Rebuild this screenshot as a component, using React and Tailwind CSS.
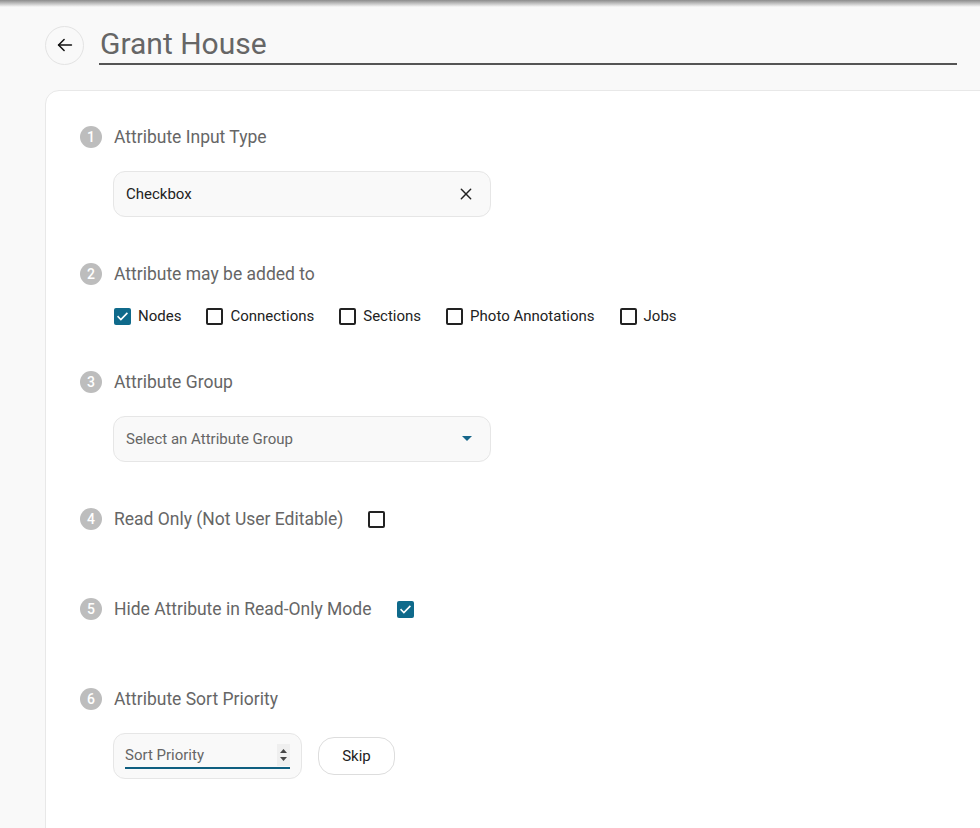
import React from "react";

const font = { fontFamily: "Roboto, 'Noto Sans', sans-serif" };

function Step({ n }) {
  return (
    <div className="w-[22px] h-[22px] rounded-full bg-[#bdbdbd] text-white text-[14px] font-medium flex items-center justify-center shrink-0">
      {n}
    </div>
  );
}

function Label({ n, children }) {
  return (
    <div className="flex items-center h-[24px]">
      <Step n={n} />
      <div className="ml-[12px] text-[17.5px] text-[#666666] leading-[24px]">{children}</div>
    </div>
  );
}

function Box({ checked }) {
  if (checked) {
    return (
      <div className="w-[17px] h-[17px] rounded-[2px] bg-[#0f6a8b] flex items-center justify-center shrink-0">
        <svg width="13" height="13" viewBox="0 0 24 24" fill="none" stroke="white" strokeWidth="3" strokeLinecap="square">
          <path d="M4 12.5l5 5L20 6.5" />
        </svg>
      </div>
    );
  }
  return <div className="w-[17px] h-[17px] rounded-[2px] border-2 border-[#222] bg-white shrink-0" />;
}

function Check({ checked, label }) {
  return (
    <div className="flex items-center">
      <Box checked={checked} />
      <span className="ml-[7px] text-[15px] text-[#222]">{label}</span>
    </div>
  );
}

export default function App() {
  return (
    <div style={font} className="relative w-[980px] h-[828px] overflow-hidden bg-[#f9f9f9]">
      <div className="absolute top-0 left-0 right-0 h-[7px] bg-gradient-to-b from-[#8c8c8c] to-[#f9f9f9]" />
      <div className="flex items-center pt-[25px] pl-[45px]">
        <div className="w-[39px] h-[39px] rounded-full border border-[#e3e3e3] bg-[#f9f9f9] flex items-center justify-center shrink-0">
          <svg width="22" height="22" viewBox="0 0 24 24" fill="none" stroke="#111" strokeWidth="1.7" strokeLinecap="round" strokeLinejoin="round">
            <path d="M19 12H5" />
            <path d="M11 18l-6-6 6-6" />
          </svg>
        </div>
        <div className="ml-[15px] w-[858px] h-[40px] border-b-2 border-[#555] flex items-end">
          <span className="ml-[1px] text-[30px] leading-[38px] text-[#666666] font-normal">Grant House</span>
        </div>
      </div>

      <div className="ml-[45px] mt-[25px] w-[960px] h-[760px] bg-white border border-[#e8e8e8] rounded-tl-[14px] pl-[34px] pt-[34px]">
        <Label n={1}>Attribute Input Type</Label>
        <div className="ml-[33px] mt-[22px] w-[378px] h-[46px] rounded-[12px] bg-[#f9f9f9] border border-[#e6e6e6] flex items-center pl-[12px] pr-[16px] justify-between">
          <span className="text-[15px] text-[#222]">Checkbox</span>
          <svg width="16" height="16" viewBox="0 0 24 24" fill="none" stroke="#222" strokeWidth="2.2" strokeLinecap="round">
            <path d="M5 5l14 14M19 5L5 19" />
          </svg>
        </div>

        <div className="mt-[45px]">
          <Label n={2}>Attribute may be added to</Label>
        </div>
        <div className="ml-[34px] mt-[20px] flex items-center gap-[25px] h-[20px]">
          <Check checked label="Nodes" />
          <Check label="Connections" />
          <Check label="Sections" />
          <Check label="Photo Annotations" />
          <Check label="Jobs" />
        </div>

        <div className="mt-[44px]">
          <Label n={3}>Attribute Group</Label>
        </div>
        <div className="ml-[33px] mt-[22px] w-[378px] h-[46px] rounded-[12px] bg-[#f9f9f9] border border-[#e6e6e6] flex items-center pl-[12px] pr-[18px] justify-between">
          <span className="text-[15px] text-[#666]">Select an Attribute Group</span>
          <svg width="10" height="6" viewBox="0 0 10 6">
            <path d="M0 0h10L5 5z" fill="#16668a" />
          </svg>
        </div>

        <div className="mt-[45px] flex items-center">
          <Label n={4}>Read Only (Not User Editable)</Label>
          <div className="ml-[25px]">
            <Box />
          </div>
        </div>

        <div className="mt-[66px] flex items-center">
          <Label n={5}>Hide Attribute in Read-Only Mode</Label>
          <div className="ml-[25px]">
            <Box checked />
          </div>
        </div>

        <div className="mt-[66px]">
          <Label n={6}>Attribute Sort Priority</Label>
        </div>
        <div className="ml-[33px] mt-[22px] flex items-center">
          <div className="w-[189px] h-[46px] rounded-[12px] bg-[#f9f9f9] border border-[#e6e6e6] flex items-center px-[11px]">
            <div className="w-full h-[26px] border-b-2 border-[#0f5f80] flex items-center justify-between">
              <span className="text-[15px] text-[#666]">Sort Priority</span>
              <div className="w-[13px] h-[22px] bg-[#efefef] flex flex-col items-center justify-center gap-[4px]">
                <svg width="7" height="4" viewBox="0 0 7 4"><path d="M0 4L3.5 0 7 4z" fill="#444" /></svg>
                <svg width="7" height="4" viewBox="0 0 7 4"><path d="M0 0h7L3.5 4z" fill="#444" /></svg>
              </div>
            </div>
          </div>
          <div className="ml-[16px] w-[77px] h-[38px] rounded-[16px] border border-[#dddddd] bg-white flex items-center justify-center text-[15px] text-[#222]">
            Skip
          </div>
        </div>
      </div>
    </div>
  );
}
